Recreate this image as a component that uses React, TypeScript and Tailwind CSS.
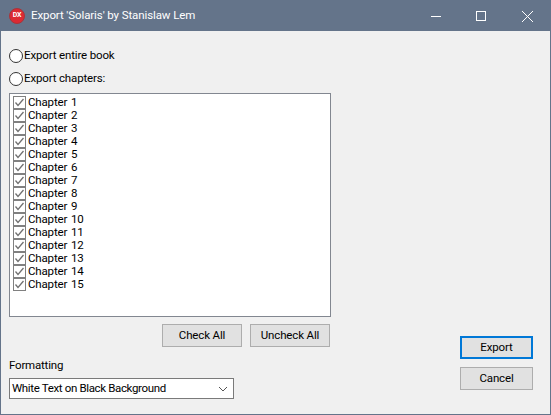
import React from 'react';

const chapters = Array.from({ length: 15 }, (_, i) => `Chapter ${i + 1}`);

const Radio = ({ label }: { label: string }) => (
  <label className="flex items-center h-[16px]">
    <span className="w-[14px] h-[14px] rounded-full border border-[#333] bg-white mr-[1px]" />
    <span>{label}</span>
  </label>
);

const Check = () => (
  <svg width="13" height="13" viewBox="0 0 13 13" className="mr-[2px] shrink-0">
    <rect x="0.5" y="0.5" width="12" height="12" fill="#fff" stroke="#808080" />
    <path d="M2.5 6.5 L5 9.5 L10.5 3" fill="none" stroke="#707070" strokeWidth="1.3" />
  </svg>
);

const Btn = ({ label, wide, focus }: { label: string; wide?: boolean; focus?: boolean }) => (
  <button
    className={`h-[23px] ${wide ? 'w-[73px]' : 'w-[80px]'} bg-[#e1e1e1] ${
      focus ? 'border-2 border-[#0078d7]' : 'border border-[#adadad]'
    }`}
  >
    {label}
  </button>
);

const App: React.FC = () => {
  return (
    <div className="w-[551px] h-[415px] flex flex-col bg-[#f0f0f0] border-x border-b border-[#64748a] text-[11.5px] tracking-[-0.15px] text-black font-['Roboto',sans-serif] overflow-hidden">
      <div className="h-[31px] shrink-0 bg-[#64748a] flex items-center text-white pl-[8px]">
        <div className="w-[16px] h-[16px] mr-[6px] rounded-full bg-[#dc2a33] border border-[#a8343a] flex items-center justify-center">
          <span className="text-[7px] leading-none font-bold text-white">DX</span>
        </div>
        <span className="text-[11.5px] tracking-[-0.1px]">Export 'Solaris' by Stanislaw Lem</span>
        <div className="ml-auto flex items-center">
          <svg width="112" height="14" viewBox="0 0 112 14" className="mr-[8px]">
            <path d="M1 7.5 H11" stroke="#fff" fill="none" />
            <rect x="46.5" y="2.5" width="9" height="9" stroke="#fff" fill="none" />
            <path d="M92 2 L103 13 M103 2 L92 13" stroke="#fff" fill="none" />
          </svg>
        </div>
      </div>

      <div className="flex-1 flex pl-[8px] pr-[17px]">
        <div className="w-[322px] flex flex-col pt-[17px]">
          <Radio label="Export entire book" />
          <div className="mt-[7px]"><Radio label="Export chapters:" /></div>
          <div className="mt-[6px] h-[224px] border border-[#828790] bg-white pl-[3px] pt-[2px]">
            {chapters.map((c) => (
              <div key={c} className="h-[13px] flex items-center leading-none [word-spacing:1px]">
                <Check />
                <span>{c}</span>
              </div>
            ))}
          </div>
          <div className="mt-[7px] flex justify-end gap-[8px] pr-[1px]">
            <Btn label="Check All" />
            <Btn label="Uncheck All" />
          </div>
          <div className="mt-[11px] h-[16px] flex items-center tracking-[-0.2px]">Formatting</div>
          <div className="mt-[4px] w-[225px] h-[21px] border border-[#7a7a7a] bg-white flex items-center justify-between pl-[2px] pr-[4px]">
            <span className="tracking-[-0.35px]">White Text on Black Background</span>
            <svg width="12" height="12" viewBox="0 0 12 12">
              <path d="M2 4 L6 8 L10 4" stroke="#555" fill="none" />
            </svg>
          </div>
        </div>
        <div className="ml-auto flex flex-col gap-[8px] pt-[305px]">
          <Btn label="Export" wide focus />
          <Btn label="Cancel" wide />
        </div>
      </div>
    </div>
  );
};

export default App;
